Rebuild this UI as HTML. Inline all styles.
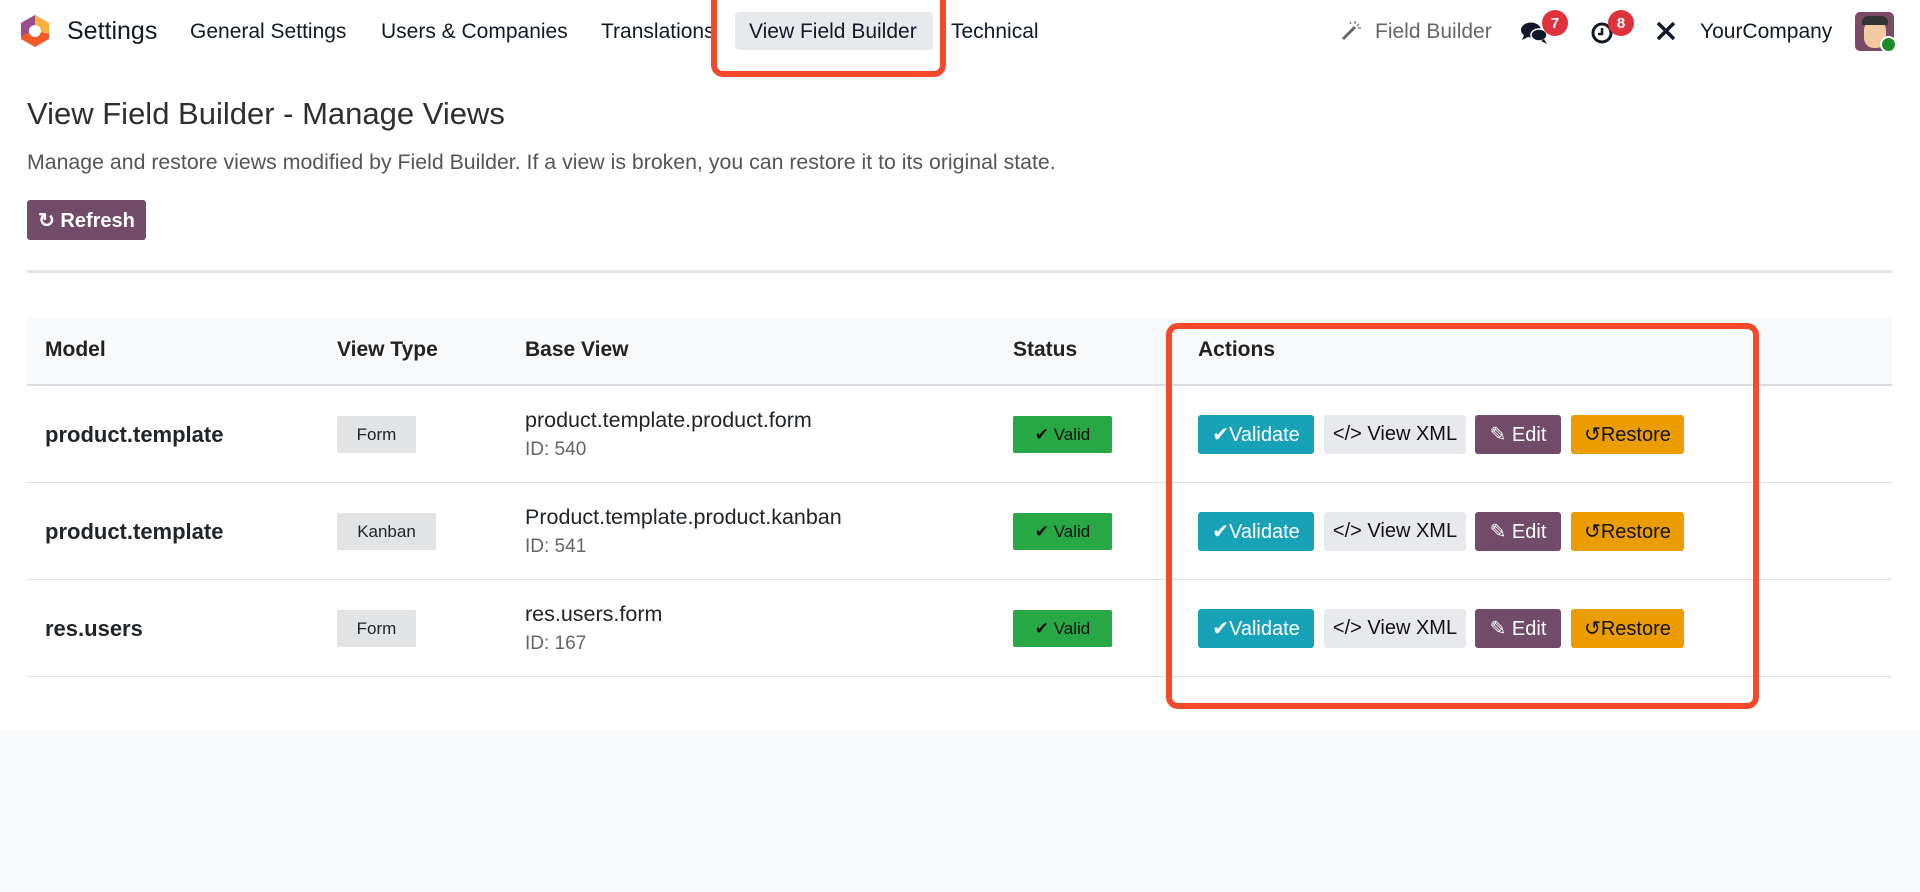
<!DOCTYPE html>
<html><head><meta charset="utf-8"><style>
*{box-sizing:border-box;margin:0;padding:0}
body{width:1920px;height:892px;background:#f8f9fa;font-family:"Liberation Sans",sans-serif;color:#212529;position:relative;overflow:hidden}
.a{position:absolute;white-space:nowrap}
.white{position:absolute;left:0;top:0;width:1920px;height:731px;background:#fff}
.nav{font-size:21px;color:#111827;top:20px}
.btn{position:absolute;height:39px;display:flex;align-items:center;justify-content:center;font-size:20px;border-radius:3px}
.badge{position:absolute;height:37px;display:flex;align-items:center;justify-content:center;font-size:17px;border-radius:2px}
.th{font-weight:bold;font-size:21px;top:338px;color:#222}
.line{position:absolute;left:27px;width:1865px;height:1px;background:#dee2e6}
.red{position:absolute;border:6px solid #f4492a;border-radius:12px}
.nb{position:absolute;width:26px;height:26px;border-radius:13px;background:#e0323c;color:#fff;font-size:15px;font-weight:bold;display:flex;align-items:center;justify-content:center}
.m{font-size:22px;font-weight:bold}
.bv{font-size:21.5px}
.id{font-size:19px;color:#666}
</style></head><body>
<div class="white"></div>
<svg class="a" style="left:20px;top:14px" width="30" height="34" viewBox="0 0 30 34"><polygon points="15,1 29,9 29,25 15,33 1,25 1,9" fill="#f05a28"/><polygon points="15,1 29,9 29,20 15,17" fill="#fbb040"/><polygon points="15,1 1,9 1,22 15,17" fill="#9b4e8c"/><circle cx="15" cy="17" r="6" fill="#fff"/></svg>
<div class="a" style="left:67px;top:17px;font-size:25px;color:#111827">Settings</div>
<div class="a nav" style="left:190px">General Settings</div>
<div class="a nav" style="left:381px">Users &amp; Companies</div>
<div class="a nav" style="left:601px">Translations</div>
<div class="a" style="left:735px;top:12px;width:198px;height:38px;background:#e7e9ed;border-radius:4px"></div>
<div class="a nav" style="left:749px">View Field Builder</div>
<div class="a nav" style="left:951px">Technical</div>
<div class="red" style="left:711px;top:-12px;width:235px;height:89px"></div>
<svg class="a" style="left:1340px;top:18px" width="24" height="24" viewBox="0 0 24 24"><path d="M3 21L15 9" stroke="#666" stroke-width="3"/><path d="M15 3v3M19 6l-2 2M21 10h-3M10 4l1 2" stroke="#888" stroke-width="1.5"/></svg>
<div class="a nav" style="left:1375px;color:#666">Field Builder</div>
<svg class="a" style="left:1520px;top:20px" width="30" height="26" viewBox="0 0 30 26"><ellipse cx="11" cy="10" rx="10" ry="7.5" fill="#111827"/><path d="M4 15l-2 5 6-3z" fill="#111827"/><ellipse cx="19" cy="15" rx="8" ry="6" fill="#111827" stroke="#fff" stroke-width="1.5"/><path d="M24 19l3 5-6-3z" fill="#111827"/></svg>
<div class="nb" style="left:1542px;top:10px">7</div>
<svg class="a" style="left:1590px;top:21px" width="24" height="24" viewBox="0 0 24 24"><circle cx="12" cy="12" r="9" fill="none" stroke="#111827" stroke-width="3"/><path d="M12 7v6h-4" stroke="#111827" stroke-width="2.5" fill="none"/></svg>
<div class="nb" style="left:1608px;top:10px">8</div>
<svg class="a" style="left:1654px;top:19px" width="24" height="24" viewBox="0 0 24 24"><path d="M4 20L20 4M4 4l16 16" stroke="#111827" stroke-width="3.5"/></svg>
<div class="a nav" style="left:1700px">YourCompany</div>
<div class="a" style="left:1855px;top:12px;width:39px;height:39px;border-radius:5px;background:#7a4a66;overflow:hidden"><div style="position:absolute;left:9px;top:8px;width:22px;height:28px;border-radius:10px;background:#f3c9a0"></div><div style="position:absolute;left:7px;top:4px;width:26px;height:9px;background:#333;border-radius:6px 6px 0 0"></div></div>
<div class="a" style="left:1880px;top:36px;width:17px;height:17px;border-radius:9px;background:#1a8c2a;border:2px solid #fff"></div>
<div class="a" style="left:27px;top:96px;font-size:31px;color:#2f2f2f">View Field Builder - Manage Views</div>
<div class="a" style="left:27px;top:150px;font-size:21.3px;color:#555">Manage and restore views modified by Field Builder. If a view is broken, you can restore it to its original state.</div>
<div class="btn" style="left:27px;top:200px;width:119px;height:40px;background:#714b67;color:#fff;font-weight:bold">&#x21bb;&nbsp;Refresh</div>
<div class="a" style="left:27px;top:270px;width:1865px;height:3px;background:#e2e4e8"></div>
<div class="a" style="left:27px;top:318px;width:1865px;height:67px;background:#f8f9fa"></div>
<div class="a" style="left:27px;top:384px;width:1865px;height:2px;background:#d9dde3"></div>
<div class="a th" style="left:45px">Model</div>
<div class="a th" style="left:337px">View Type</div>
<div class="a th" style="left:525px">Base View</div>
<div class="a th" style="left:1013px">Status</div>
<div class="a th" style="left:1198px">Actions</div>
<div class="line" style="top:482px"></div>
<div class="line" style="top:579px"></div>
<div class="line" style="top:676px"></div>

<div class="a m" style="left:45px;top:422px">product.template</div>
<div class="a m" style="left:45px;top:519px">product.template</div>
<div class="a m" style="left:45px;top:616px">res.users</div>

<div class="badge" style="left:337px;top:416px;width:79px;background:#e2e3e5">Form</div>
<div class="badge" style="left:337px;top:513px;width:99px;background:#e2e3e5">Kanban</div>
<div class="badge" style="left:337px;top:610px;width:79px;background:#e2e3e5">Form</div>

<div class="a bv" style="left:525px;top:408px">product.template.product.form</div>
<div class="a id" style="left:525px;top:439px">ID: 540</div>
<div class="a bv" style="left:525px;top:505px">Product.template.product.kanban</div>
<div class="a id" style="left:525px;top:536px">ID: 541</div>
<div class="a bv" style="left:525px;top:602px">res.users.form</div>
<div class="a id" style="left:525px;top:633px">ID: 167</div>

<div class="badge" style="left:1013px;top:416px;width:99px;background:#28a745;color:#111">&#10004;&nbsp;Valid</div>
<div class="badge" style="left:1013px;top:513px;width:99px;background:#28a745;color:#111">&#10004;&nbsp;Valid</div>
<div class="badge" style="left:1013px;top:610px;width:99px;background:#28a745;color:#111">&#10004;&nbsp;Valid</div>

<div class="btn" style="left:1198px;top:415px;width:116px;background:#17a2b8;color:#fff">&#10004;Validate</div>
<div class="btn" style="left:1324px;top:415px;width:142px;background:#e7e9ed;color:#111">&lt;/&gt; View XML</div>
<div class="btn" style="left:1475px;top:415px;width:86px;background:#714b67;color:#fff">&#9998; Edit</div>
<div class="btn" style="left:1571px;top:415px;width:113px;background:#eb9d00;color:#111">&#x21ba;Restore</div>

<div class="btn" style="left:1198px;top:512px;width:116px;background:#17a2b8;color:#fff">&#10004;Validate</div>
<div class="btn" style="left:1324px;top:512px;width:142px;background:#e7e9ed;color:#111">&lt;/&gt; View XML</div>
<div class="btn" style="left:1475px;top:512px;width:86px;background:#714b67;color:#fff">&#9998; Edit</div>
<div class="btn" style="left:1571px;top:512px;width:113px;background:#eb9d00;color:#111">&#x21ba;Restore</div>

<div class="btn" style="left:1198px;top:609px;width:116px;background:#17a2b8;color:#fff">&#10004;Validate</div>
<div class="btn" style="left:1324px;top:609px;width:142px;background:#e7e9ed;color:#111">&lt;/&gt; View XML</div>
<div class="btn" style="left:1475px;top:609px;width:86px;background:#714b67;color:#fff">&#9998; Edit</div>
<div class="btn" style="left:1571px;top:609px;width:113px;background:#eb9d00;color:#111">&#x21ba;Restore</div>

<div class="red" style="left:1166px;top:323px;width:593px;height:386px"></div>
</body></html>
